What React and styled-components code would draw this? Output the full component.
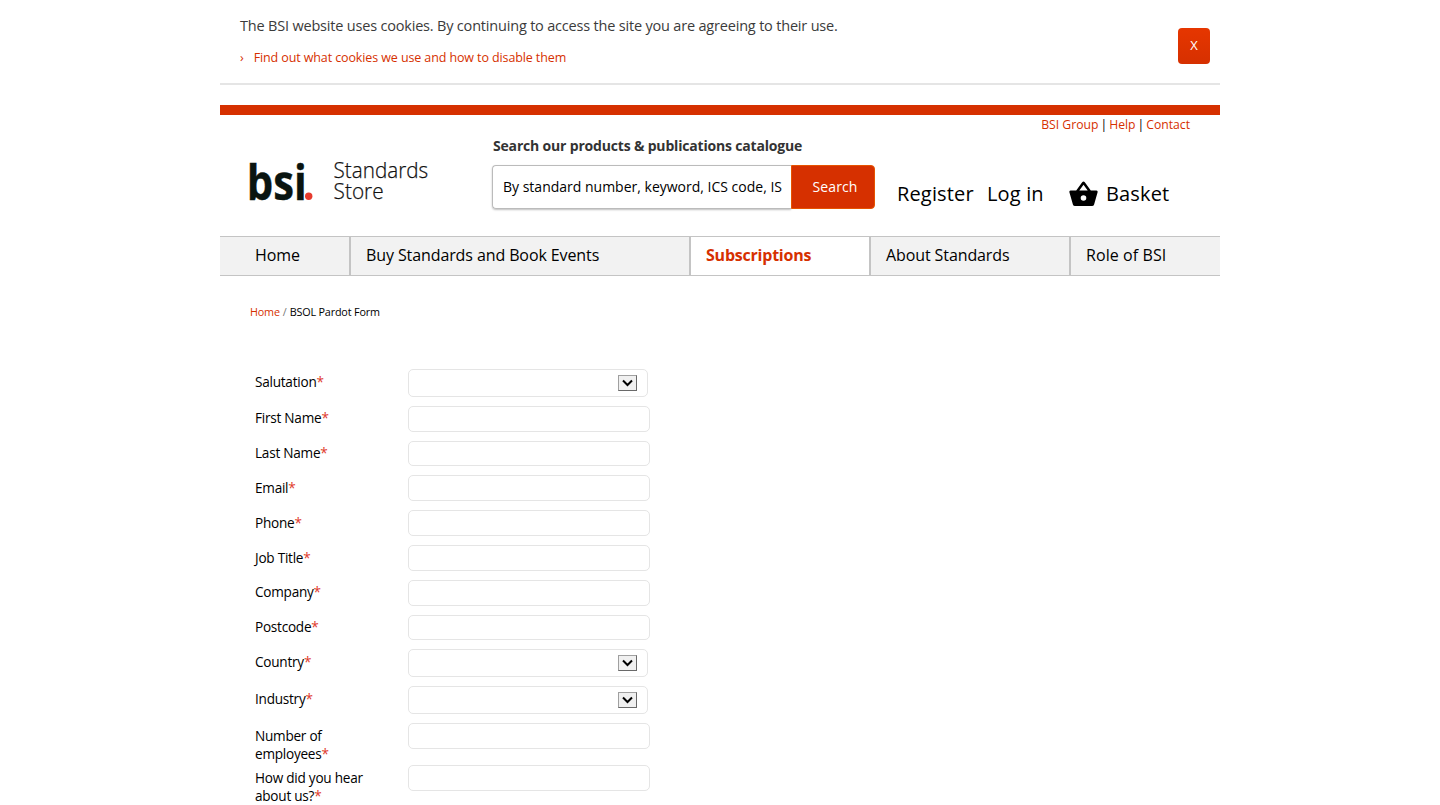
import React from "react";
import styled, { createGlobalStyle, css } from "styled-components";

const RED = "#d63000";

const GlobalStyle = createGlobalStyle`
  * { box-sizing: border-box; }
  html { overflow: hidden; }
  body {
    margin: 0;
    background: #fff;
    color: #000;
    font-family: "Open Sans", "Noto Sans", sans-serif;
  }
`;

const Page = styled.div`
  width: 1000px;
  height: 805px;
  margin: 0 auto;
  overflow: hidden;
`;

const CookieBar = styled.section`
  display: flex;
  justify-content: space-between;
  height: 85px;
  padding: 0 10px 0 20px;
  border-bottom: 2px solid #e5e5e5;
`;

const CookieMessage = styled.p`
  margin: 15px 0 0;
  font-size: 14.5px;
  line-height: 22px;
  letter-spacing: -0.19px;
  white-space: nowrap;
  color: #3b3b3b;
`;

const CookieLink = styled.a`
  display: flex;
  align-items: center;
  gap: 10px;
  margin-top: 11px;
  height: 20px;
  font-size: 12.5px;
  line-height: 20px;
  letter-spacing: -0.11px;
  white-space: nowrap;
  color: ${RED};
`;

const CloseButton = styled.button`
  width: 32px;
  height: 36px;
  margin: 28px 0 0;
  padding: 0 0 2px;
  border: 0;
  border-radius: 4px;
  background: linear-gradient(#e63600, #d63000);
  color: #fff;
  font: inherit;
  font-size: 13px;
  line-height: 34px;
`;

const Header = styled.header`
  display: flex;
  height: 131px;
  margin-top: 20px;
  padding: 0 30px;
  border-top: 10px solid ${RED};
`;

const Brand = styled.svg`
  display: block;
  width: 190px;
  height: 60px;
  margin-top: 35px;
  overflow: visible;
`;

const SearchForm = styled.div`
  width: 383px;
  margin: 20px 0 0 52px;
`;

const SearchTitle = styled.h2`
  margin: 0 0 9px 1px;
  font-size: 14px;
  font-weight: 700;
  line-height: 21px;
  letter-spacing: -0.18px;
  white-space: nowrap;
  color: #333;
`;

const SearchRow = styled.div`
  display: flex;
  height: 44px;
`;

const SearchField = styled.div`
  flex: 1;
  padding-left: 10px;
  border: 1px solid #bbb;
  border-right: 0;
  border-radius: 4px 0 0 4px;
  box-shadow: 0 1px 2px rgba(0, 0, 0, 0.25);
  font-size: 14px;
  line-height: 42px;
  white-space: nowrap;
`;

const SearchButton = styled.button`
  position: relative;
  width: 84px;
  padding: 0 0 2px 4px;
  border: 1px solid #e65300;
  border-radius: 0 4px 4px 0;
  background: ${RED};
  color: #fff;
  font: inherit;
  font-size: 14px;
  letter-spacing: 0.1px;
`;

const Account = styled.div`
  display: flex;
  flex: 1;
  flex-direction: column;
  justify-content: space-between;
  padding-bottom: 27px;
`;

const UtilityLinks = styled.nav`
  display: flex;
  justify-content: flex-end;
  gap: 2px;
  font-size: 12.2px;
  line-height: 20px;
  white-space: nowrap;
`;

const RedLink = styled.a`
  color: ${RED};
`;

const AccountLinks = styled.nav`
  display: flex;
  align-items: center;
  height: 30px;
  padding-left: 22px;
  font-size: 20px;
  line-height: 30px;
  letter-spacing: 0.15px;
  white-space: nowrap;
`;

const AccountLink = styled.a`
  width: ${(p) => p.$width}px;
`;

const BasketIcon = styled.svg`
  display: block;
  width: 29px;
  height: 26px;
  margin-right: 8px;
`;

const MainNav = styled.nav`
  display: grid;
  grid-template-columns: 131px 340px 180px 200px 149px;
  height: 40px;
  border: solid #c4c4c4;
  border-width: 1px 0;
`;

const NavItem = styled.a`
  padding-left: ${(p) => (p.$first ? 35 : 15)}px;
  border-right: 2px solid #c4c4c4;
  background: #f2f2f2;
  font-size: 16px;
  line-height: 37px;
  letter-spacing: -0.1px;
  white-space: nowrap;
  &:last-child { border-right: 0; letter-spacing: 0.08px; }
  ${(p) => p.$active && css`
    background: #fff;
    color: ${RED};
    font-weight: 700;
    letter-spacing: -0.22px;
  `}
`;

const Breadcrumb = styled.div`
  display: flex;
  gap: 3px;
  height: 16px;
  margin: 28px 0 49px 30px;
  font-size: 10.8px;
  line-height: 16px;
  letter-spacing: -0.17px;
`;

const Slash = styled.span`
  color: #777;
`;

const Form = styled.form`
  margin-left: 35px;
`;

const FormRow = styled.div`
  display: grid;
  grid-template-columns: 153px auto;
  justify-content: start;
  align-items: start;
  height: ${(p) => p.$height}px;
`;

const Label = styled.label`
  width: 130px;
  padding-top: ${(p) => p.$offset}px;
  font-size: 13.6px;
  line-height: 18px;
  letter-spacing: -0.25px;
`;

const Required = styled.span`
  color: #e0392b;
`;

const TextBox = styled.div`
  width: 242px;
  height: ${(p) => p.$height}px;
  border: 1px solid #e5e5e5;
  border-radius: 5px;
`;

const SelectBox = styled.div`
  display: flex;
  justify-content: flex-end;
  align-items: center;
  width: 240px;
  height: 28px;
  padding-right: 10px;
  border: 1px solid #e5e5e5;
  border-radius: 5px;
`;

const SelectArrow = styled.span`
  display: flex;
  justify-content: center;
  align-items: center;
  width: 19px;
  height: 16px;
  border: 1px solid;
  border-color: #a0a0a0 #696969 #696969 #a0a0a0;
  background: #f0f0f0;
`;

const FIELDS = [
  { label: "Salutation", select: true, row: 37, offset: 4 },
  { label: "First Name", row: 35, offset: 3, box: 26 },
  { label: "Last Name", row: 34, offset: 3, box: 25 },
  { label: "Email", row: 35, offset: 4, box: 26 },
  { label: "Phone", row: 35, offset: 4, box: 26 },
  { label: "Job Title", row: 35, offset: 4, box: 26 },
  { label: "Company", row: 35, offset: 3, box: 26 },
  { label: "Postcode", row: 34, offset: 3, box: 25 },
  { label: "Country", select: true, row: 37, offset: 4 },
  { label: "Industry", select: true, row: 37, offset: 4 },
  { label: "Number of employees", row: 42, offset: 4, box: 26 },
  { label: "How did you hear about us?", row: 42, offset: 4, box: 26 },
];

const NAV = ["Home", "Buy Standards and Book Events", "Subscriptions", "About Standards", "Role of BSI"];

function Logo() {
  return (
    <Brand viewBox="0 0 190 60" aria-label="bsi. Standards Store">
      <text x="-3.2" y="49.5" fontSize="49" fontWeight="700" fill="#0a1410" stroke="#0a1410" strokeWidth="0.4" textLength="60" lengthAdjust="spacingAndGlyphs">bsi</text>
      <circle cx="58.7" cy="46.3" r="3.7" fill="#e63b2e" />
      <g fontSize="22.5" fontWeight="300" fill="#111" stroke="#111" strokeWidth="0.25">
        <text x="83.6" y="28" textLength="94.5" lengthAdjust="spacingAndGlyphs">Standards</text>
        <text x="83.6" y="49" textLength="50" lengthAdjust="spacingAndGlyphs">Store</text>
      </g>
    </Brand>
  );
}

export default function App() {
  return (
    <Page>
      <GlobalStyle />
      <CookieBar>
        <div>
          <CookieMessage>
            The BSI website uses cookies. By continuing to access the site you are agreeing to their use.
          </CookieMessage>
          <CookieLink>
            <span>›</span>
            <span>Find out what cookies we use and how to disable them</span>
          </CookieLink>
        </div>
        <CloseButton>X</CloseButton>
      </CookieBar>
      <Header>
        <Logo />
        <SearchForm>
          <SearchTitle>Search our products &amp; publications catalogue</SearchTitle>
          <SearchRow>
            <SearchField>By standard number, keyword, ICS code, IS</SearchField>
            <SearchButton>Search</SearchButton>
          </SearchRow>
        </SearchForm>
        <Account>
          <UtilityLinks>
            <RedLink>BSI Group</RedLink>
            <span>|</span>
            <RedLink>Help</RedLink>
            <span>|</span>
            <RedLink>Contact</RedLink>
          </UtilityLinks>
          <AccountLinks>
            <AccountLink $width={90}>Register</AccountLink>
            <AccountLink $width={82}>Log in</AccountLink>
            <BasketIcon viewBox="0 0 29 26">
              <path d="M1.5 9.5H7.2L13.2 1.2Q14.5 0 15.8 1.2L21.8 9.5H27.5Q29 9.8 28.6 11.2L25.1 23.4Q24.6 25 23 25H6Q4.4 25 3.9 23.4L.4 11.2Q0 9.8 1.5 9.5ZM10.3 9.5H18.7L14.5 3.7ZM14.5 14.2A2.8 2.8 0 1 0 14.5 19.8A2.8 2.8 0 1 0 14.5 14.2Z" fillRule="evenodd" />
            </BasketIcon>
            <a>Basket</a>
          </AccountLinks>
        </Account>
      </Header>
      <MainNav>
        {NAV.map((item, i) => (
          <NavItem key={item} $first={i === 0} $active={item === "Subscriptions"}>{item}</NavItem>
        ))}
      </MainNav>
      <Breadcrumb>
        <RedLink>Home</RedLink>
        <Slash>/</Slash>
        <span>BSOL Pardot Form</span>
      </Breadcrumb>
      <Form>
        {FIELDS.map((f) => (
          <FormRow key={f.label} $height={f.row}>
            <Label $offset={f.offset}>{f.label}<Required>*</Required></Label>
            {f.select ? (
              <SelectBox>
                <SelectArrow>
                  <svg width="11" height="8" viewBox="0 0 11 8">
                    <path d="M1 1.5L5.5 6L10 1.5" fill="none" stroke="#000" strokeWidth="2" />
                  </svg>
                </SelectArrow>
              </SelectBox>
            ) : (
              <TextBox $height={f.box} />
            )}
          </FormRow>
        ))}
      </Form>
    </Page>
  );
}
